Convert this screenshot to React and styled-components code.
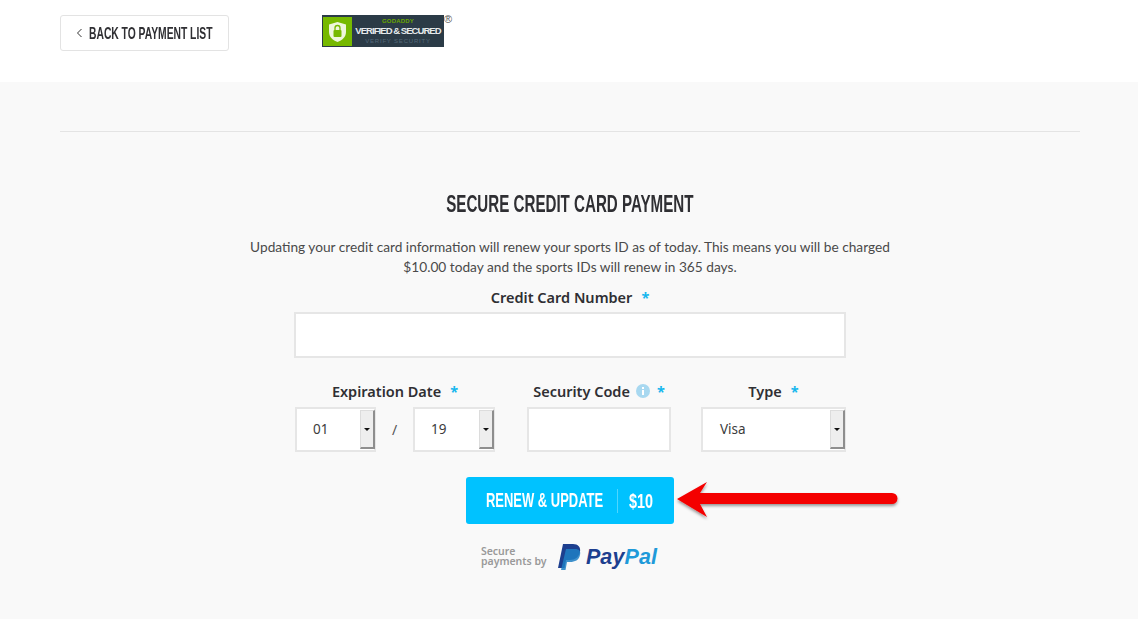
import React from "react";
import styled, { createGlobalStyle } from "styled-components";

const Global = createGlobalStyle`
  html, body { margin: 0; padding: 0; background: #f9f9f9; }
  body { font-family: "Noto Sans", "Open Sans", sans-serif; color: #333; }
  * { box-sizing: border-box; }
`;

const condensed = `"Liberation Sans", sans-serif`;

const Page = styled.div`
  width: 1138px;
  height: 619px;
  overflow: hidden;
  background: #f9f9f9;
`;

const Header = styled.header`
  height: 82px;
  background: #fff;
  display: flex;
  align-items: flex-start;
  padding: 15px 0 0 60px;
`;

const BackButton = styled.a`
  width: 169px;
  height: 36px;
  background: #fff;
  border: 1px solid #e3e3e3;
  border-radius: 3px;
  display: flex;
  align-items: center;
  padding-left: 15px;
  gap: 6px;
  color: #2f2f33;
  overflow: hidden;
`;

const Chevron = styled.svg`
  flex: none;
`;

const Squeeze = styled.span`
  display: inline-block;
  flex: none;
  white-space: nowrap;
  transform: scaleX(${(p) => p.$x});
  transform-origin: ${(p) => p.$origin || "left"} center;
`;

const BackLabel = styled(Squeeze)`
  margin-top: 1px;
  font-family: ${condensed};
  font-weight: 700;
  font-size: 17px;
  line-height: 20px;
`;

const SealWrap = styled.div`
  margin-left: 93px;
  position: relative;
  width: 122px;
  height: 32px;
`;

const Seal = styled.div`
  width: 122px;
  height: 32px;
  background: #2b3b47;
  display: flex;
  align-items: stretch;
  padding: 2px 0 1px 1px;
`;

const SealGreen = styled.div`
  flex: none;
  width: 29px;
  background: #76b900;
  display: flex;
  align-items: center;
  justify-content: center;
`;

const SealText = styled.div`
  flex: 1;
  min-width: 0;
  display: flex;
  flex-direction: column;
  align-items: center;
  justify-content: center;
  font-family: "Liberation Sans", sans-serif;
  line-height: 1;
`;

const SealTop = styled.span`
  font-size: 6px;
  font-weight: 700;
  color: #6aa800;
  letter-spacing: 0.2px;
  line-height: 7px;
`;

const SealMain = styled.span`
  font-size: 9.5px;
  font-weight: 700;
  color: #e6eaec;
  letter-spacing: -0.95px;
  line-height: 12px;
  white-space: nowrap;
`;

const SealBottom = styled.span`
  font-size: 6px;
  color: #54697a;
  letter-spacing: 0.8px;
  line-height: 8px;
  white-space: nowrap;
`;

const Registered = styled.span`
  position: absolute;
  left: 122px;
  top: -1px;
  font-size: 11px;
  line-height: 11px;
  color: #555;
  font-family: "Liberation Sans", sans-serif;
`;

const Main = styled.main`
  padding: 49px 58px 0 60px;
  display: flex;
  flex-direction: column;
  align-items: stretch;
`;

const Rule = styled.hr`
  width: 1020px;
  height: 1px;
  margin: 0;
  border: 0;
  background: #e4e4e4;
`;

const Centered = styled.div`
  width: 1020px;
  display: flex;
  flex-direction: column;
  align-items: center;
`;

const Title = styled.h1`
  margin: 58px 0 0;
  height: 28px;
  font-family: ${condensed};
  font-weight: 700;
  font-size: 23px;
  line-height: 28px;
  color: #2f2f33;
  display: flex;
  justify-content: center;
`;

const Intro = styled.p`
  margin: 19px 0 0;
  width: 660px;
  text-align: center;
  font-family: Lato, "Noto Sans", sans-serif;
  font-size: 13.7px;
  line-height: 20px;
  color: #4a4a4a;
`;

const Form = styled.form`
  width: 552px;
  display: flex;
  flex-direction: column;
`;

const Label = styled.div`
  display: flex;
  justify-content: center;
  align-items: center;
  height: 20px;
  font-size: 14.5px;
  font-weight: 600;
  color: #2f2f33;
  white-space: nowrap;
`;

const Star = styled.span`
  color: #16b7ee;
  font-weight: 700;
  margin-left: ${(p) => p.$gap || 9}px;
`;

const Input = styled.div`
  height: ${(p) => p.$h}px;
  background: #fff;
  border: 2px solid #e6e6e6;
`;

const CardField = styled.div`
  margin-top: 10px;
  display: flex;
  flex-direction: column;
  gap: 5px;
`;

const Row = styled.div`
  margin-top: 23px;
  display: flex;
  align-items: flex-start;
`;

const Group = styled.div`
  width: ${(p) => p.$w}px;
  margin-left: ${(p) => p.$ml || 0}px;
  display: flex;
  flex-direction: column;
  gap: 6px;
`;

const Pair = styled.div`
  display: flex;
  align-items: center;
`;

const Slash = styled.span`
  width: 37px;
  text-align: center;
  font-size: 14px;
  color: #555;
`;

const Select = styled.div`
  width: ${(p) => p.$w}px;
  height: 45px;
  background: #fff;
  border: 2px solid #e6e6e6;
  display: flex;
  align-items: center;
  justify-content: space-between;
  padding-left: ${(p) => p.$pl || 16}px;
  padding-bottom: 1px;
  font-size: 13.5px;
  color: #3c3c3c;
`;

const Spinner = styled.div`
  width: 15px;
  height: 39px;
  margin: 0 -1px -1px 0;
  background: #eeeeee;
  border-left: 1px solid #dcdcdc;
  border-right: 2px solid #8e8e8e;
  border-bottom: 2px solid #8e8e8e;
  border-top: 1px solid #ddd;
  display: flex;
  align-items: center;
  justify-content: center;
`;

const Caret = styled.span`
  width: 0;
  height: 0;
  border-left: 3px solid transparent;
  border-right: 3px solid transparent;
  border-top: 3px solid #111;
`;

const Actions = styled.div`
  margin-top: 25px;
  position: relative;
  display: flex;
  justify-content: center;
  width: 552px;
`;

const Pay = styled.button`
  width: 208px;
  height: 47px;
  border: 0;
  border-radius: 3px;
  background: #00c2ff;
  color: #fff;
  display: flex;
  align-items: center;
  padding: 0 0 0 20px;
  font-family: ${condensed};
  font-weight: 700;
  font-size: 20px;
  overflow: hidden;
`;

const PayText = styled.span`
  flex: none;
  width: 131px;
  display: flex;
`;

const PayPrice = styled.span`
  border-left: 1px solid #4fd6ff;
  padding-left: 11px;
  line-height: 24px;
`;

const Arrow = styled.svg`
  position: absolute;
  left: 380px;
  top: 0;
  overflow: visible;
`;

const Secure = styled.div`
  margin-top: 20px;
  padding-right: 2px;
  display: flex;
  justify-content: center;
`;

const SecureText = styled.div`
  width: 77px;
  margin-top: -2px;
  font-size: 10.5px;
  line-height: 10px;
  font-weight: 600;
  color: #9a9a9a;
  white-space: nowrap;
`;

const PayPalWord = styled.span`
  margin-left: 5px;
  font-family: "Liberation Sans", sans-serif;
  font-style: italic;
  font-weight: 700;
  font-size: 21.5px;
  color: #1d3f8f;
  letter-spacing: 0.1px;
`;

const PayPalPal = styled.span`
  color: #1f9ad9;
`;

const Info = styled.svg`
  margin-left: 6px;
`;

export default function App() {
  return (
    <Page>
      <Global />
      <Header>
        <BackButton>
          <Chevron width="7" height="10" viewBox="0 0 7 10" fill="none">
            <path d="M5.500 1 1.500 5l4 4" stroke="#333" strokeWidth="1" />
          </Chevron>
          <BackLabel $x={0.606}>BACK TO PAYMENT LIST</BackLabel>
        </BackButton>
        <SealWrap>
          <Seal>
            <SealGreen>
              <svg width="19" height="22" viewBox="0 0 19 22">
                <path d="M9.500 1 18 3.500V11c0 5-4 8.500-8.500 10C5 19.500 1 16 1 11V3.500Z" fill="#eef6dc" />
                <rect x="5.500" y="9" width="8" height="7" rx="1" fill="#76b900" />
                <path d="M7 9V7a2.500 2.500 0 0 1 5 0v2" fill="none" stroke="#76b900" strokeWidth="1.300" />
              </svg>
            </SealGreen>
            <SealText>
              <SealTop>GODADDY</SealTop>
              <SealMain>VERIFIED &amp; SECURED</SealMain>
              <SealBottom>VERIFY SECURITY</SealBottom>
            </SealText>
          </Seal>
          <Registered>®</Registered>
        </SealWrap>
      </Header>
      <Main>
        <Rule />
        <Centered>
          <Title>
            <Squeeze $x={0.658} $origin="center">SECURE CREDIT CARD PAYMENT</Squeeze>
          </Title>
          <Intro>
            Updating your credit card information will renew your sports ID as of today. This means you will be charged
            $10.00 today and the sports IDs will renew in 365 days.
          </Intro>
          <Form>
            <CardField>
              <Label>
                Credit Card Number<Star>*</Star>
              </Label>
              <Input $h={46} />
            </CardField>
            <Row>
              <Group $w={200} $ml={1}>
                <Label>
                  Expiration Date<Star>*</Star>
                </Label>
                <Pair>
                  <Select $w={81}>
                    01
                    <Spinner><Caret /></Spinner>
                  </Select>
                  <Slash>/</Slash>
                  <Select $w={82}>
                    19
                    <Spinner><Caret /></Spinner>
                  </Select>
                </Pair>
              </Group>
              <Group $w={144} $ml={32}>
                <Label>
                  Security Code
                  <Info width="14" height="14" viewBox="0 0 14 14">
                    <circle cx="7" cy="7" r="7" fill="#a8d8f0" />
                    <rect x="6" y="6" width="2" height="5" fill="#fff" />
                    <rect x="6" y="3" width="2" height="2" fill="#fff" />
                  </Info>
                  <Star $gap={7}>*</Star>
                </Label>
                <Input $h={45} />
              </Group>
              <Group $w={145} $ml={30}>
                <Label>
                  Type<Star>*</Star>
                </Label>
                <Select $w={145} $pl={17}>
                  Visa
                  <Spinner><Caret /></Spinner>
                </Select>
              </Group>
            </Row>
            <Actions>
              <Pay type="button">
                <PayText>
                  <Squeeze $x={0.648}>RENEW &amp; UPDATE</Squeeze>
                </PayText>
                <PayPrice>
                  <Squeeze $x={0.72}>$10</Squeeze>
                </PayPrice>
              </Pay>
              <Arrow width="225" height="40" viewBox="0 0 225 40">
                <defs>
                  <filter id="arrowShadow" x="-5%" y="-20%" width="110%" height="150%">
                    <feDropShadow dx="0" dy="2" stdDeviation="1.500" floodColor="#000" floodOpacity="0.4" />
                  </filter>
                </defs>
                <path
                  d="M3 22 33 5 26 16 218 16a5.500 5.500 0 0 1 0 11L26 27 33 40Z"
                  fill="#f40000"
                  filter="url(#arrowShadow)"
                />
              </Arrow>
            </Actions>
            <Secure>
              <Pair>
                <SecureText>
                  Secure
                  <br />
                  payments by
                </SecureText>
                <svg width="23" height="26" viewBox="0 0 23 26">
                  <path d="M5 0h10c5 0 8 3 7 8-1 5-5 8-10 8H8l-1.500 8H0Z" fill="#1d3f8f" />
                  <path d="M8 5h9c4 0 6 2 5 6-1 5-5 7-10 7H9l-1.500 8H3Z" fill="#1f7fc4" opacity="0.85" />
                </svg>
                <PayPalWord>
                  Pay<PayPalPal>Pal</PayPalPal>
                </PayPalWord>
              </Pair>
            </Secure>
          </Form>
        </Centered>
      </Main>
    </Page>
  );
}
